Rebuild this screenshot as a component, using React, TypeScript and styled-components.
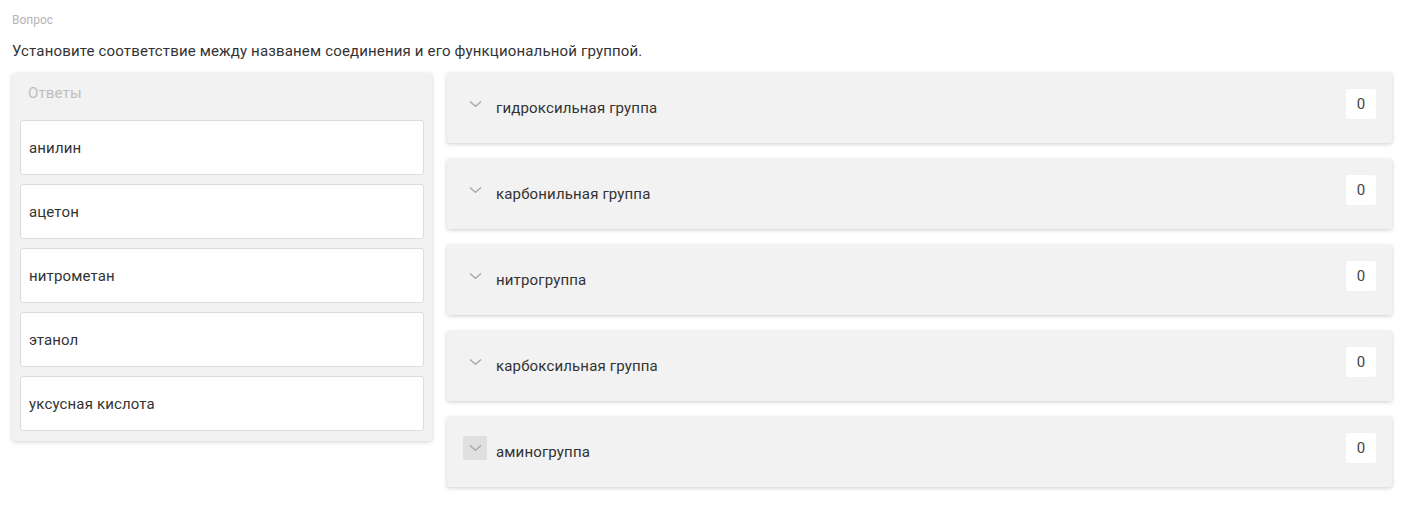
import React from "react";
import styled, { createGlobalStyle } from "styled-components";

const Global = createGlobalStyle`
  html, body { margin: 0; padding: 0; background: #fff; }
  body { font-family: Roboto, "Noto Sans", Arial, sans-serif; color: #333; }
`;

const Page = styled.div`
  padding: 12px 24px 12px 12px;
`;

const Label = styled.div`
  font-size: 12px;
  color: #b5b5b5;
  line-height: 16px;
  height: 16px;
`;

const Question = styled.div`
  margin-top: 14px;
  font-size: 15px;
  letter-spacing: 0.16px;
  line-height: 18px;
  color: #333;
`;

const Columns = styled.div`
  display: flex;
  align-items: flex-start;
  gap: 15px;
  margin-top: 13px;
`;

const AnswersPanel = styled.div`
  width: 420px;
  flex: none;
  background: #f2f2f2;
  border-radius: 3px;
  box-shadow: 0 1px 4px rgba(0, 0, 0, 0.18);
  padding: 10px 8px 10px 8px;
  box-sizing: border-box;
  display: flex;
  flex-direction: column;
  gap: 9px;
`;

const PanelTitle = styled.div`
  font-size: 15px;
  letter-spacing: 0.15px;
  color: #bdbdbd;
  line-height: 18px;
  padding: 1px 0 0 8px;
  height: 28px;
  box-sizing: border-box;
`;

const AnswerCard = styled.div`
  height: 55px;
  box-sizing: border-box;
  background: #fff;
  border: 1px solid #dcdcdc;
  border-radius: 3px;
  display: flex;
  align-items: center;
  padding: 0 8px 0 8px;
  font-size: 15px;
  letter-spacing: 0.15px;
  color: #333;
`;

const Groups = styled.div`
  flex: 1;
  display: flex;
  flex-direction: column;
  gap: 16px;
`;

const GroupRow = styled.div`
  height: 70px;
  box-sizing: border-box;
  background: #f2f2f2;
  border-radius: 2px;
  box-shadow: 0 1px 4px rgba(0, 0, 0, 0.2);
  display: flex;
  align-items: center;
  padding: 0 16px 0 16px;
`;

const Toggle = styled.div<{ $active?: boolean }>`
  width: 24px;
  height: 24px;
  flex: none;
  display: flex;
  align-items: center;
  justify-content: center;
  background: ${(p) => (p.$active ? "#e0e0e0" : "transparent")};
  border-radius: 2px;
  margin-right: 9px;
  margin-top: -8px;
`;

const GroupName = styled.div`
  flex: 1;
  font-size: 15px;
  letter-spacing: 0.15px;
  color: #333;
`;

const Count = styled.div`
  width: 30px;
  height: 30px;
  background: #fff;
  border-radius: 3px;
  display: flex;
  align-items: center;
  justify-content: center;
  font-size: 15px;
  color: #444;
  margin-top: -8px;
`;

const Chevron = () => (
  <svg width="13" height="8" viewBox="0 0 13 8" fill="none">
    <path d="M1 1.5L6.5 6.2L12 1.5" stroke="#aaaaaa" strokeWidth="1.5" />
  </svg>
);

const answers = ["анилин", "ацетон", "нитрометан", "этанол", "уксусная кислота"];
const groups = [
  "гидроксильная группа",
  "карбонильная группа",
  "нитрогруппа",
  "карбоксильная группа",
  "аминогруппа",
];

export default function App() {
  return (
    <Page>
      <Global />
      <Label>Вопрос</Label>
      <Question>Установите соответствие между названем соединения и его функциональной группой.</Question>
      <Columns>
        <AnswersPanel>
          <PanelTitle>Ответы</PanelTitle>
          {answers.map((a) => (
            <AnswerCard key={a}>{a}</AnswerCard>
          ))}
        </AnswersPanel>
        <Groups>
          {groups.map((g, i) => (
            <GroupRow key={g}>
              <Toggle $active={i === groups.length - 1}>
                <Chevron />
              </Toggle>
              <GroupName>{g}</GroupName>
              <Count>0</Count>
            </GroupRow>
          ))}
        </Groups>
      </Columns>
    </Page>
  );
}
